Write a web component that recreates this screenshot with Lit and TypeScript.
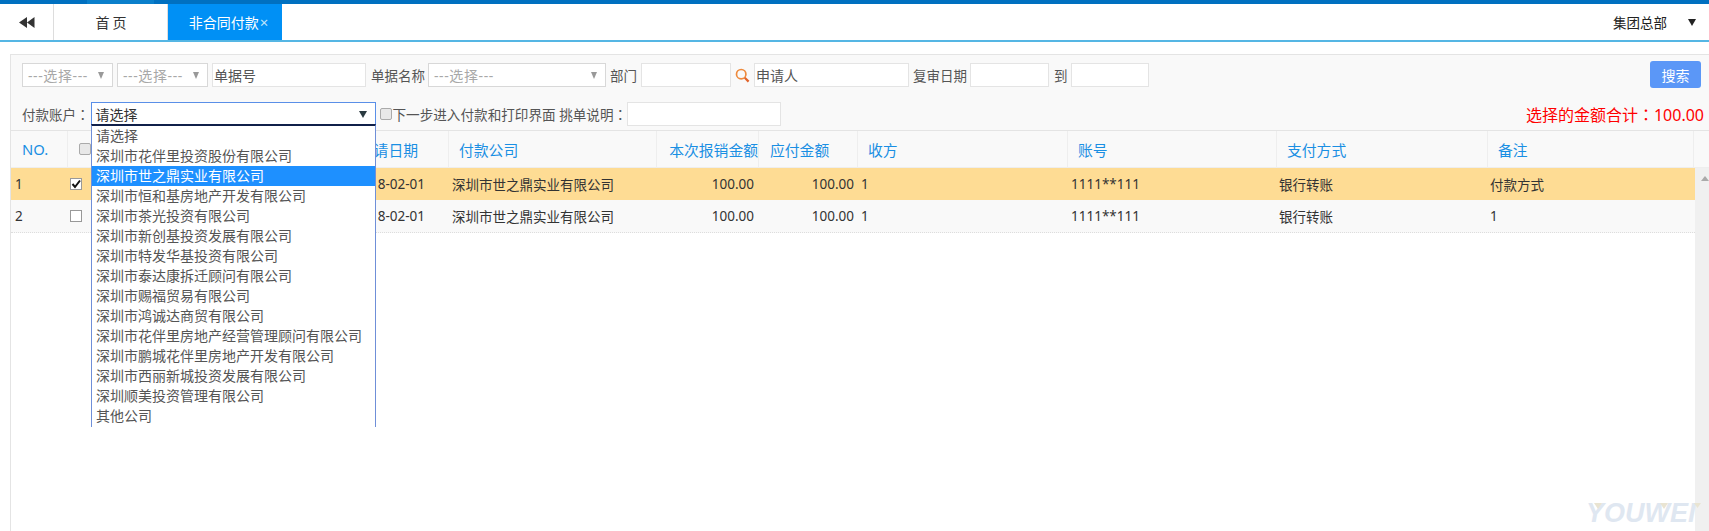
import { LitElement, html, css } from "lit";
import { customElement } from "lit/decorators.js";

const OPTIONS = [
  "请选择",
  "深圳市花伴里投资股份有限公司",
  "深圳市世之鼎实业有限公司",
  "深圳市恒和基房地产开发有限公司",
  "深圳市茶光投资有限公司",
  "深圳市新创基投资发展有限公司",
  "深圳市特发华基投资有限公司",
  "深圳市泰达康拆迁顾问有限公司",
  "深圳市赐福贸易有限公司",
  "深圳市鸿诚达商贸有限公司",
  "深圳市花伴里房地产经营管理顾问有限公司",
  "深圳市鹏城花伴里房地产开发有限公司",
  "深圳市西丽新城投资发展有限公司",
  "深圳顺美投资管理有限公司",
  "其他公司",
];

const ROWS = [
  { no: "1", checked: true, note: "付款方式" },
  { no: "2", checked: false, note: "1" },
];

@customElement("app-root")
export class AppRoot extends LitElement {
  static styles = css`
    :host {
      display: block;
      width: 1709px;
      height: 531px;
      overflow: hidden;
      position: relative;
      background: #fff;
      font-family: "Noto Sans", "Noto Sans CJK SC", sans-serif;
      font-size: 14px;
      color: #444;
    }
    * { box-sizing: border-box; }
    .top { height: 4px; background: #0070c0; display: flex; }
    .top .seg { width: 67px; margin-left: 87px; background: #0a7fcb; }
    .nav {
      height: 38px;
      display: flex;
      align-items: stretch;
      border-bottom: 2px solid #55b6e4;
      color: #333;
    }
    .back { width: 54px; border-right: 1px solid #ddd; display: flex; align-items: center; justify-content: center; }
    .home { width: 114px; border-right: 1px solid #ddd; display: flex; align-items: center; justify-content: center; letter-spacing: 3px; padding-left: 4px; }
    .tab { width: 114px; background: #0090f5; color: #fff; display: flex; align-items: center; justify-content: center; padding-left: 7px; white-space: nowrap; }
    .tab span { font-size: 15px; line-height: 1; color: #bfe3fb; margin-left: 1px; }
    .org { margin-left: auto; display: flex; align-items: center; gap: 21px; padding-right: 13px; color: #222; font-size: 13.5px; }
    .caret { width: 0; height: 0; border-left: 4px solid transparent; border-right: 4px solid transparent; border-top: 7px solid #222; }
    .panel {
      margin: 12px 0 0 10px;
      border-left: 1px solid #e4e4e4;
      border-top: 1px solid #e4e4e4;
      height: 478px;
      position: relative;
    }
    .filters { background: #f9f9f9; height: 76px; padding: 8px 8px 0 11px; border-bottom: 1px solid #e4e4e4; }
    .f-row { display: flex; align-items: center; height: 24px; white-space: nowrap; }
    .f-row + .f-row { margin-top: 15px; }
    .sel {
      height: 24px; background: #fff; border: 1px solid #d8d8d8; display: flex; align-items: center;
      justify-content: space-between; padding: 0 8px 0 5px; color: #a8a8a8; font-size: 14px; letter-spacing: .6px;
    }
    .sel i { width: 0; height: 0; border-left: 3.5px solid transparent; border-right: 3.5px solid transparent; border-top: 7px solid #999; }
    .inp { height: 24px; background: #fff; border: 1px solid #e4e4e4; padding: 0 1px; display: flex; align-items: center; color: #555; }
    .lab { color: #555; font-size: 13.5px; }
    .tc { font-family: "Noto Sans CJK TC", sans-serif; }
    .btn { margin-left: auto; width: 51px; height: 27px; border-radius: 3px; background: #5b97f7; color: #fff; display: flex; align-items: center; justify-content: center; font-size: 14px; margin-top: -1px; }
    .cur { width: 285px; height: 24px; border: 1px solid #5a8fe8; background: #fff; display: flex; align-items: center; justify-content: space-between; padding: 0 8px 0 4px; color: #333; }
    .cur i { width: 0; height: 0; border-left: 4px solid transparent; border-right: 4px solid transparent; border-top: 7px solid #2a3a40; }
    .cb { width: 12px; height: 12px; border: 1px solid #aaa; border-radius: 2px; background: #e8e8e8; flex: none; }
    .total { margin-left: auto; color: #f00; font-size: 16px; margin-right: -3px; }
    .grid { display: grid; grid-template-columns: 57px 100px 281px 208px 102px 99px 210px 209px 211px 206px; }
    .head { background: #f9f9f9; height: 37px; border-bottom: 1px solid #eee; align-items: center; color: #1a8fe3; width: 1698px; font-size: 14.8px; }
    .head > div { height: 36px; display: flex; align-items: center; border-right: 1px solid #eee; padding-left: 10px; white-space: nowrap; }
    .head > .r { justify-content: flex-end; padding: 0; }
    .rows { width: 1684px; font-size: 13.5px; }
    .rw { height: 32px; align-items: center; color: #333; grid-template-columns: 57px 100px 281px 208px 102px 99px 210px 208px 211px 208px; }
    .rw > div { padding-left: 3px; white-space: nowrap; }
    .rw > .r { text-align: right; padding: 0 4px 0 0; }
    .rw.on { background: #fedc94; }
    .rw.off { background: #f9f9f9; border-bottom: 1px dotted #ddd; height: 33px; }
    .ck { width: 12px; height: 12px; border: 1px solid #999; background: #fff; display: flex; align-items: center; justify-content: center; margin-left: -1px; }
    .sb { position: absolute; right: 0; top: 113px; width: 14px; bottom: 0; background: #f0f0f0; display: flex; justify-content: flex-end; padding-top: 8px; }
    .sb i { width: 0; height: 0; border-left: 4.5px solid transparent; border-right: 4.5px solid transparent; border-bottom: 5px solid #aaa; }
    .drop {
      position: absolute; left: 80px; top: 69px; width: 285px; height: 303px;
      background: #fff; border: 1px solid #6f8fd8; border-top: 2px solid #10204a; border-bottom: none;
      color: #555; overflow: hidden;
    }
    .opt { height: 20px; line-height: 19px; padding-left: 4px; white-space: nowrap; }
    .opt.sel-on { background: #1e90ff; color: #fff; }
    .wm {
      position: absolute; left: 1586px; top: 495px; font: italic 900 27px/36px "Liberation Sans", sans-serif;
      color: #dfe7f1; white-space: nowrap;
    }
    .wm svg { position: absolute; left: 0; top: 8px; }
  `;

  render() {
    return html`
      <div class="top"><div class="seg"></div></div>
      <div class="nav">
        <div class="back">
          <svg width="16" height="11" viewBox="0 0 16 11"><path d="M8 0v11L0 5.5zM15.5 0v11L8 5.5z" fill="#333"/></svg>
        </div>
        <div class="home">首页</div>
        <div class="tab">非合同付款<span>×</span></div>
        <div class="org">集团总部<span class="caret"></span></div>
      </div>
      <div class="panel">
        <div class="filters">
          <div class="f-row">
            <div class="sel" style="width:91px">---选择---<i></i></div>
            <div class="sel" style="width:91px;margin-left:4px">---选择---<i></i></div>
            <div class="inp" style="width:154px;margin-left:4px">单据号</div>
            <span class="lab" style="margin:0 3px 0 5px">单据名称</span>
            <div class="sel" style="width:178px">---选择---<i></i></div>
            <span class="lab" style="margin:0 4px">部门</span>
            <div class="inp" style="width:90px"></div>
            <svg style="margin:0 4px" width="15" height="15" viewBox="0 0 15 15"><circle cx="6.2" cy="6.2" r="4.7" fill="none" stroke="#ee8a3c" stroke-width="1.7"/><path d="M9.8 9.8l3.8 3.8" stroke="#e2632a" stroke-width="2.2"/></svg>
            <div class="inp" style="width:155px">申请人</div>
            <span class="lab" style="margin:0 3px 0 4px">复审日期</span>
            <div class="inp" style="width:79px"></div>
            <span class="lab" style="margin:0 3.5px 0 5px">到</span>
            <div class="inp" style="width:78px"></div>
            <div class="btn">搜索</div>
          </div>
          <div class="f-row">
            <span class="lab" style="margin-right:1px">付款账户<span class="tc">：</span></span>
            <div class="cur">请选择<i></i></div>
            <span class="cb" style="margin:0 1px 0 4px"></span>
            <span class="lab" style="font-size:13.6px">下一步进入付款和打印界面 挑单说明<span class="tc">：</span></span>
            <div class="inp" style="width:154px"></div>
            <span class="total">选择的金额合计<span class="tc">：</span>100.00</span>
          </div>
        </div>
        <div class="grid head">
          <div style="padding-left:11px">NO.</div>
          <div><span class="cb" style="margin-left:1px"></span></div>
          <div style="justify-content:flex-end;padding-right:30px">申请日期</div>
          <div>付款公司</div>
          <div class="r">本次报销金额</div>
          <div class="r" style="justify-content:flex-start;padding-left:11px">应付金额</div>
          <div>收方</div>
          <div>账号</div>
          <div>支付方式</div>
          <div>备注</div>
        </div>
        <div class="rows">
          ${ROWS.map(
            (r) => html`
              <div class="grid rw ${r.checked ? "on" : "off"}">
                <div style="padding-left:4px">${r.no}</div>
                <div><span class="ck">${r.checked
                  ? html`<svg width="10" height="10" viewBox="0 0 10 10"><path d="M1.5 5l2.5 3 5-6.5" fill="none" stroke="#111" stroke-width="2"/></svg>`
                  : ""}</span></div>
                <div style="text-align:right;padding-right:24px">2018-02-01</div>
                <div>深圳市世之鼎实业有限公司</div>
                <div class="r" style="padding-right:5px">100.00</div>
                <div class="r">100.00</div>
                <div>1</div>
                <div>1111**111</div>
                <div>银行转账</div>
                <div>${r.note}</div>
              </div>
            `
          )}
        </div>
        <div class="drop">
          ${OPTIONS.map((o, i) => html`<div class="opt ${i === 2 ? "sel-on" : ""}">${o}</div>`)}
        </div>
        <div class="sb"><i></i></div>
      </div>
      <div class="wm">YOUWEI<svg width="118" height="8" viewBox="0 0 118 8"><path d="M8 0h8l-4 6zM74 0h8l-4 6zM108 0h7l-3.500 5z" fill="#e9e4d2"/></svg></div>
    `;
  }
}
